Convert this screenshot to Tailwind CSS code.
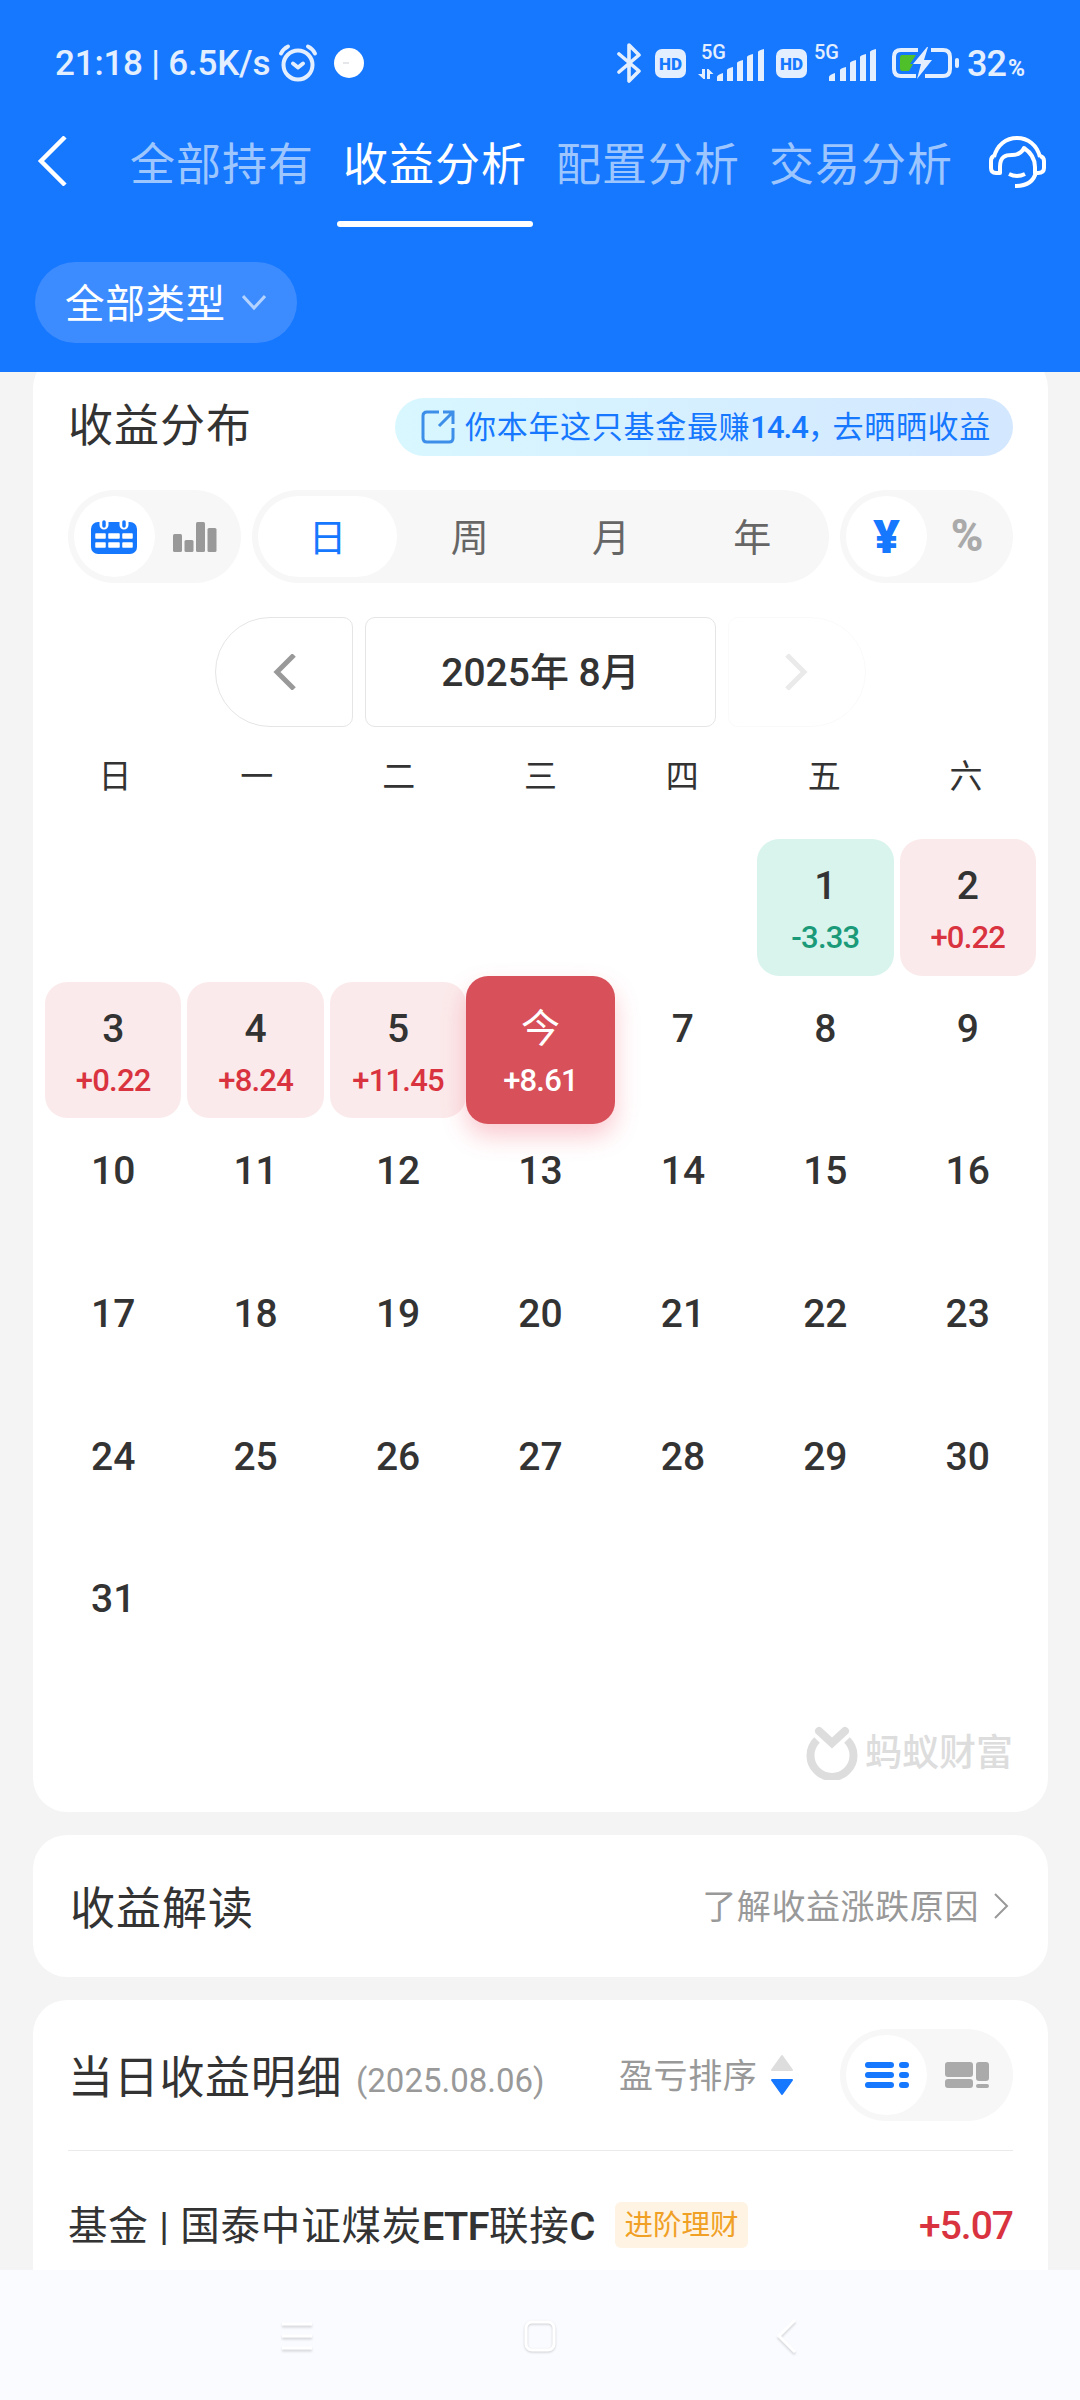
<!DOCTYPE html>
<html lang="zh-CN">
  <head>
    <meta charset="UTF-8" />
    <meta name="viewport" content="width=device-width, initial-scale=1.0" />
    <title>收益分析</title>
    <script src="https://cdn.jsdelivr.net/npm/@tailwindcss/browser@4"></script>
    <style>
      body {
        font-family: Roboto, "Noto Sans CJK SC", sans-serif;
      }
    </style>
  </head>
  <body class="w-[1080px] h-[2400px] overflow-hidden bg-[#f4f4f4] text-[#333] flex flex-col whitespace-nowrap">
    <header class="h-[372px] shrink-0 bg-[#1677ff] text-white">
      <!-- status bar -->
      <div class="h-[126px] flex items-center text-[#e3efff]">
        <div class="ml-[55px] w-[221px] text-[35px] font-medium tracking-[-0.2px] pt-[2px]">21:18 | 6.5K/s</div>
        <svg class="ml-[2px] -mt-[1px]" width="40" height="40" viewBox="0 0 40 40" fill="none" stroke="currentColor" stroke-width="4" stroke-linecap="round" stroke-linejoin="round">
          <circle cx="20" cy="22" r="14.5" />
          <path d="M3 10.500Q5 6 10 3.500M37 10.500Q35 6 30 3.500M15 20.500l5 4 5-4" />
        </svg>
        <div class="ml-[16px] size-[30px] rounded-full bg-white flex items-center pl-[9px]">
          <div class="w-[6px] h-[2px] bg-gray-200"></div>
        </div>
        <svg class="ml-[253px]" width="25" height="40" viewBox="0 0 25 40" fill="none" stroke="currentColor" stroke-width="3.600" stroke-linecap="round" stroke-linejoin="round">
          <path d="M2 11l20 17-10 10V2l10 10L2 29" />
        </svg>
        <div class="ml-[13px] w-[31px] h-[29px] rounded-[7px] bg-[#e3efff] text-[#1677ff] text-[17px] font-black leading-[30px] text-center">HD</div>
        <svg class="ml-[12px]" width="68" height="48" viewBox="0 -4 68 48" fill="currentColor">
          <text x="3" y="16" font-size="20" font-weight="500">5G</text>
          <path d="M4 26h3v10H5.500L0 31h4zM9 36V26h1.500l5 5H12v5z" />
          <path d="M19 34q0-2 6-4v8h-6zM29 27q0-1.500 6-3v14h-6zM39 20q0-1.500 6-3v21h-6zM49 14q0-1.500 6-3v27h-6zM60 9q0-1.500 6-3v32h-6z" />
        </svg>
        <div class="ml-[10px] w-[31px] h-[29px] rounded-[7px] bg-[#e3efff] text-[#1677ff] text-[17px] font-black leading-[30px] text-center">HD</div>
        <svg class="ml-[5px]" width="68" height="48" viewBox="0 -4 68 48" fill="currentColor">
          <text x="2" y="16" font-size="20" font-weight="500">5G</text>
          <path d="M17 34q0-2 6-4v8h-6zM28 27q0-1.500 6-3v14h-6zM38 20q0-1.500 6-3v21h-6zM48 14q0-1.500 6-3v27h-6zM58 9q0-1.500 6-3v32h-6z" />
        </svg>
        <svg class="ml-[11px]" width="70" height="34" viewBox="0 0 70 34" fill="none">
          <path d="M27 4H10Q3 4 3 11v12q0 7 7 7h15M40 4h12q7 0 7 7v12q0 7-7 7H34" stroke="#e3efff" stroke-width="4" />
          <path d="M11 9h14l-6 9h3l-4 7h-7q-2 0-2-3V12q0-3 2-3z" fill="#4fbf2a" />
          <path d="M36 1L22 18h8l-4 15 15-19h-8l4-13z" fill="#e3efff" />
          <rect x="64" y="12" width="4" height="10" rx="2" fill="#e3efff" />
        </svg>
        <div class="ml-[6px] text-[36px] font-medium tracking-[-1px] pt-[1px]">32<span class="text-[23px] ml-[2px] font-bold">%</span></div>
      </div>
      <!-- tabs -->
      <div class="h-[101px] flex items-start">
        <svg class="ml-[37px] mt-[10px] w-[30px] shrink-0" height="50" viewBox="0 0 30 50" fill="none" stroke="white" stroke-width="4.500">
          <path d="M28 1L4 25l24 24" />
        </svg>
        <div class="ml-[63px] flex gap-[29px] text-[45px] tracking-[1px] text-[#9dc6ff]">
          <div class="w-[184px] h-[76px] leading-[79px]">全部持有</div>
          <div class="w-[184px] text-white flex flex-col items-center">
            <div class="h-[76px] leading-[79px] w-[184px]">收益分析</div>
            <div class="mt-[19px] h-[6px] w-[196px] rounded-full bg-white"></div>
          </div>
          <div class="w-[184px] h-[76px] leading-[79px]">配置分析</div>
          <div class="w-[184px] h-[76px] leading-[79px]">交易分析</div>
        </div>
        <svg class="ml-[35px] mt-[9px]" width="58" height="54" viewBox="0 0 58 54" fill="none" stroke="white" stroke-width="4" stroke-linejoin="round">
          <path d="M6 22C9 10 18 3 29 3s20 7 23 19" />
          <path d="M6 21q-3 1-3 5v7q0 5 5 5h4v-6c0-11 6-12 12-12 7 0 10-3 12-7 6 4 11 11 11 19v6h3q6 0 6-5v-7q0-4-4-5" />
          <path d="M48 37c-2 9-9 14-21 14M21 39q8 4 16 0" />
        </svg>
      </div>
      <div class="ml-[35px] mt-[35px] w-[262px] h-[81px] rounded-full bg-[#3d8cff] flex items-center pl-[30px]">
        <div class="w-[162px] text-[39.500px] tracking-[0.700px] pt-[4px]">全部类型</div>
        <svg class="ml-[15px]" width="24" height="18" viewBox="0 0 24 18" fill="none" stroke="#b5d3ff" stroke-width="3">
          <path d="M1 2l11 12L23 2" />
        </svg>
      </div>
    </header>

    <main class="h-[1898px] shrink-0 overflow-hidden flex flex-col gap-[23px] pl-[33px] pr-[32px]">
      <!-- calendar card -->
      <section class="-mt-[18px] h-[1458px] shrink-0 rounded-[34px] bg-white">
        <div class="pt-[44px] ml-[35px] mr-[35px] flex justify-between items-center">
          <h1 class="text-[45px] tracking-[1px] leading-[58px]">收益分布</h1>
          <div class="w-[618px] h-[58px] rounded-full bg-linear-to-r from-[#d8f7ff] to-[#d3e7ff] text-[#1677ff] flex items-center">
            <svg class="ml-[26px]" width="34" height="34" viewBox="0 0 34 34" fill="none" stroke="#3d8ee8" stroke-width="3">
              <path d="M18 2H6Q2 2 2 6v22q0 4 4 4h22q4 0 4-4V18" />
              <path d="M18 16L32 2M22 2h10v12" />
            </svg>
            <div class="ml-[10px] pt-[2px] text-[31px] tracking-[0.700px]">你本年这只基金最赚<span class="font-medium tracking-[-1px]">14.4</span><span class="-mr-[7px]">，</span>去晒晒收益</div>
          </div>
        </div>

        <div class="mt-[34px] ml-[35px] mr-[35px] flex justify-between h-[93px] text-[38px] text-[#666]">
          <div class="w-[173px] rounded-full bg-[#f7f7f7] p-[6px] flex items-center">
            <div class="w-[81px] h-[81px] rounded-full bg-white flex items-center justify-center">
              <svg class="-ml-[2px]" width="46" height="34" viewBox="0 0 46 34">
                <rect x="0" y="2" width="46" height="32" rx="7" fill="#1677ff" />
                <path d="M13 0v5M33 0v5" stroke="white" stroke-width="9" stroke-linecap="round" />
                <path d="M13 2v4M33 2v4" stroke="#1677ff" stroke-width="3.500" stroke-linecap="round" />
                <path d="M5 14h9v4H5zM18 14h10v4H18zM32 14h9v4H32zM5 23h9v4H5zM18 23h10v4H18zM32 23h9v4H32z" fill="white" stroke="white" stroke-width="1.500" stroke-linejoin="round" />
              </svg>
            </div>
            <svg class="ml-[18px]" width="44" height="30" viewBox="0 0 44 30" fill="#999">
              <rect x="0" y="12" width="9" height="18" rx="1.500" />
              <rect x="11.500" y="18" width="9" height="12" rx="1.500" />
              <rect x="23" y="0" width="9" height="30" rx="1.500" />
              <rect x="34.500" y="6" width="9" height="24" rx="1.500" />
            </svg>
          </div>
          <div class="w-[577px] rounded-full bg-[#f7f7f7] p-[6px] grid grid-cols-4 text-center leading-[85px]">
            <div class="w-[139px] h-[81px] rounded-full bg-white text-[#1677ff]">日</div>
            <div>周</div>
            <div>月</div>
            <div>年</div>
          </div>
          <div class="w-[173px] rounded-full bg-[#f7f7f7] p-[6px] flex text-[46px] font-extrabold leading-[79px] text-center">
            <div class="w-[81px] h-[81px] rounded-full bg-white text-[#1677ff] font-['Open_Sans']">¥</div>
            <div class="w-[80px] text-[#aaa] text-[44px] leading-[81px]">%</div>
          </div>
        </div>

        <div class="mt-[34px] ml-[182px] flex gap-[12px] h-[110px]">
          <div class="w-[138px] rounded-l-[55px] rounded-r-[10px] border border-[#e5e5e5] flex items-center justify-center">
            <svg width="24" height="36" viewBox="0 0 24 36" fill="none" stroke="#999" stroke-width="5">
              <path d="M22 1L5 18l17 17" />
            </svg>
          </div>
          <div class="w-[351px] rounded-[10px] border border-[#e5e5e5] text-[39px] font-medium leading-[111px] text-center">2025年 8月</div>
          <div class="w-[138px] rounded-r-[55px] rounded-l-[10px] border border-[#e5e5e5] flex items-center justify-center opacity-20">
            <svg width="24" height="36" viewBox="0 0 24 36" fill="none" stroke="#999" stroke-width="5">
              <path d="M2 1l17 17L2 35" />
            </svg>
          </div>
        </div>

        <div class="mt-[25px] ml-[11px] w-[993px] grid grid-cols-7 text-center text-[33px] leading-[50px]">
          <div>日</div>
          <div>一</div>
          <div>二</div>
          <div>三</div>
          <div>四</div>
          <div>五</div>
          <div>六</div>
        </div>
        <div id="days" class="mt-[37px] ml-[12px] w-[991px] h-[850px] grid grid-cols-7 grid-rows-6 gap-[6px] text-center font-medium"></div>

        <div class="mt-[35px] mr-[34px] flex justify-end items-center text-[#ddd]">
          <svg width="52" height="54" viewBox="0 0 52 54" fill="none" stroke="currentColor">
            <path d="M11 14A21.500 21.500 0 1 0 41 14" stroke-width="8" />
            <path d="M13 5l13 12L39 5" stroke-width="8" stroke-linecap="round" />
          </svg>
          <div class="ml-[7px] w-[149px] text-[37px] font-medium leading-[54px] pt-[3px]">蚂蚁财富</div>
        </div>
      </section>

      <section class="h-[142px] shrink-0 rounded-[34px] bg-white flex items-center justify-between pl-[37px] pr-[39px]">
        <h2 class="text-[45px] tracking-[1px] pt-[7px]">收益解读</h2>
        <div class="flex items-center text-[34px] tracking-[0.600px] text-[#999]">
          <span class="pt-[2px]">了解收益涨跌原因</span>
          <svg class="ml-[14px]" width="16" height="26" viewBox="0 0 16 26" fill="none" stroke="#999" stroke-width="2">
            <path d="M2 1l12 12L2 25" />
          </svg>
        </div>
      </section>

      <!-- daily detail card -->
      <section class="h-[330px] shrink-0 rounded-[34px] bg-white px-[35px]">
        <div class="h-[151px] border-b border-[#eaeaea] flex items-center">
          <h2 class="w-[278px] text-[45px] tracking-[0.700px] leading-[60px] pt-[7px]">当日收益明细</h2>
          <div class="ml-[10px] w-[187px] text-[33px] text-[#999] pt-[11px]">(2025.08.06)</div>
          <div class="ml-[76px] w-[140px] text-[34px] tracking-[0.600px] text-[#999] pt-[2px]">盈亏排序</div>
          <svg class="ml-[11px]" width="24" height="42" viewBox="0 0 24 42" stroke-linejoin="round" stroke-width="2">
            <path d="M12 2l10 14H2z" fill="#ddd" stroke="#ddd" />
            <path d="M12 40L2 26h20z" fill="#1677ff" stroke="#1677ff" />
          </svg>
          <div class="ml-auto w-[173px] h-[92px] rounded-full bg-[#f7f7f7] p-[6px] flex items-center">
            <div class="w-[81px] h-[80px] rounded-full bg-white flex items-center justify-center">
              <svg width="46" height="26" viewBox="0 0 46 26" stroke="#1677ff" stroke-width="6" stroke-linecap="round">
                <path d="M4 3h23M38 3h4M4 13h23M38 13h4M4 23h23M38 23h4" />
              </svg>
            </div>
            <svg class="ml-[18px]" width="44" height="26" viewBox="0 0 44 26" fill="#aaa">
              <rect x="0" y="0" width="28" height="15" rx="3" />
              <rect x="0" y="17" width="28" height="9" rx="3" />
              <rect x="31" y="0" width="13" height="19" rx="3" />
              <rect x="31" y="22" width="13" height="4" rx="2" />
            </svg>
          </div>
        </div>
        <div class="h-[148px] flex items-center">
          <div class="w-[547px] pt-[3px] text-[39.500px] tracking-[0.800px]">基金 | 国泰中证煤炭<span class="font-semibold tracking-[-0.6px]">ETF</span>联接<span class="font-semibold">C</span></div>
          <div class="w-[133px] h-[46px] rounded-[6px] bg-[#fff3e4] text-[#f0a024] text-[28.500px] leading-[48px] text-center">进阶理财</div>
          <div class="ml-auto pt-[2px] text-[39px] font-medium tracking-[-1px] text-[#d9333f]">+5.07</div>
        </div>
      </section>
    </main>

    <!-- system navigation -->
    <nav class="h-[130px] shrink-0 bg-[#fafbfe] flex items-center">
      <svg class="ml-[280px] mt-[4px] drop-shadow-[0_2px_1px_rgba(0,0,0,0.15)]" width="34" height="34" viewBox="0 0 34 34" stroke="white" stroke-width="3">
        <path d="M2 4h30M2 16h30M2 28h30" />
      </svg>
      <svg class="ml-[208px] mt-[4px] drop-shadow-[0_1px_1px_rgba(0,0,0,0.18)]" width="36" height="36" viewBox="0 0 36 36" fill="none" stroke="white" stroke-width="3">
        <rect x="4" y="3" width="28" height="28" rx="6" />
      </svg>
      <svg class="ml-[217px] mt-[2px] drop-shadow-[0_2px_1px_rgba(0,0,0,0.15)]" width="24" height="36" viewBox="0 0 24 36" fill="none" stroke="white" stroke-width="3">
        <path d="M20 2L4 18l16 16" />
      </svg>
    </nav>

    <script>
      const profits = { 1: "-3.33", 2: "+0.22", 3: "+0.22", 4: "+8.24", 5: "+11.45", 6: "+8.61" };
      const today = 6;
      const days = document.getElementById("days");

      // 2025-08-01 is a Friday
      let html = '<div class="col-span-5"></div>';
      for (let d = 1; d <= 31; d++) {
        let box = "";
        let text = "";
        if (d === today) {
          box = "-m-[6px] p-[6px] rounded-[22px] bg-[#d8505a] text-white shadow-[0_12px_24px_rgba(240,80,100,0.3)] relative";
        } else if (profits[d]) {
          const up = profits[d][0] === "+";
          box = up ? "rounded-[22px] bg-[#fbeaeb]" : "rounded-[22px] bg-[#d8f4ec]";
          text = up ? "text-[#d9333f]" : "text-[#1a9a78]";
        }
        html += `<div class="${box}">
          <div class="pt-[18px] h-[76px] text-[39px] leading-[58px]">${d === today ? '<span class="font-normal">今</span>' : d}</div>
          <div class="text-[31px] leading-[46px] tracking-[-0.8px] ${text}">${profits[d] || ""}</div>
        </div>`;
      }
      days.innerHTML = html;
    </script>
  </body>
</html>
